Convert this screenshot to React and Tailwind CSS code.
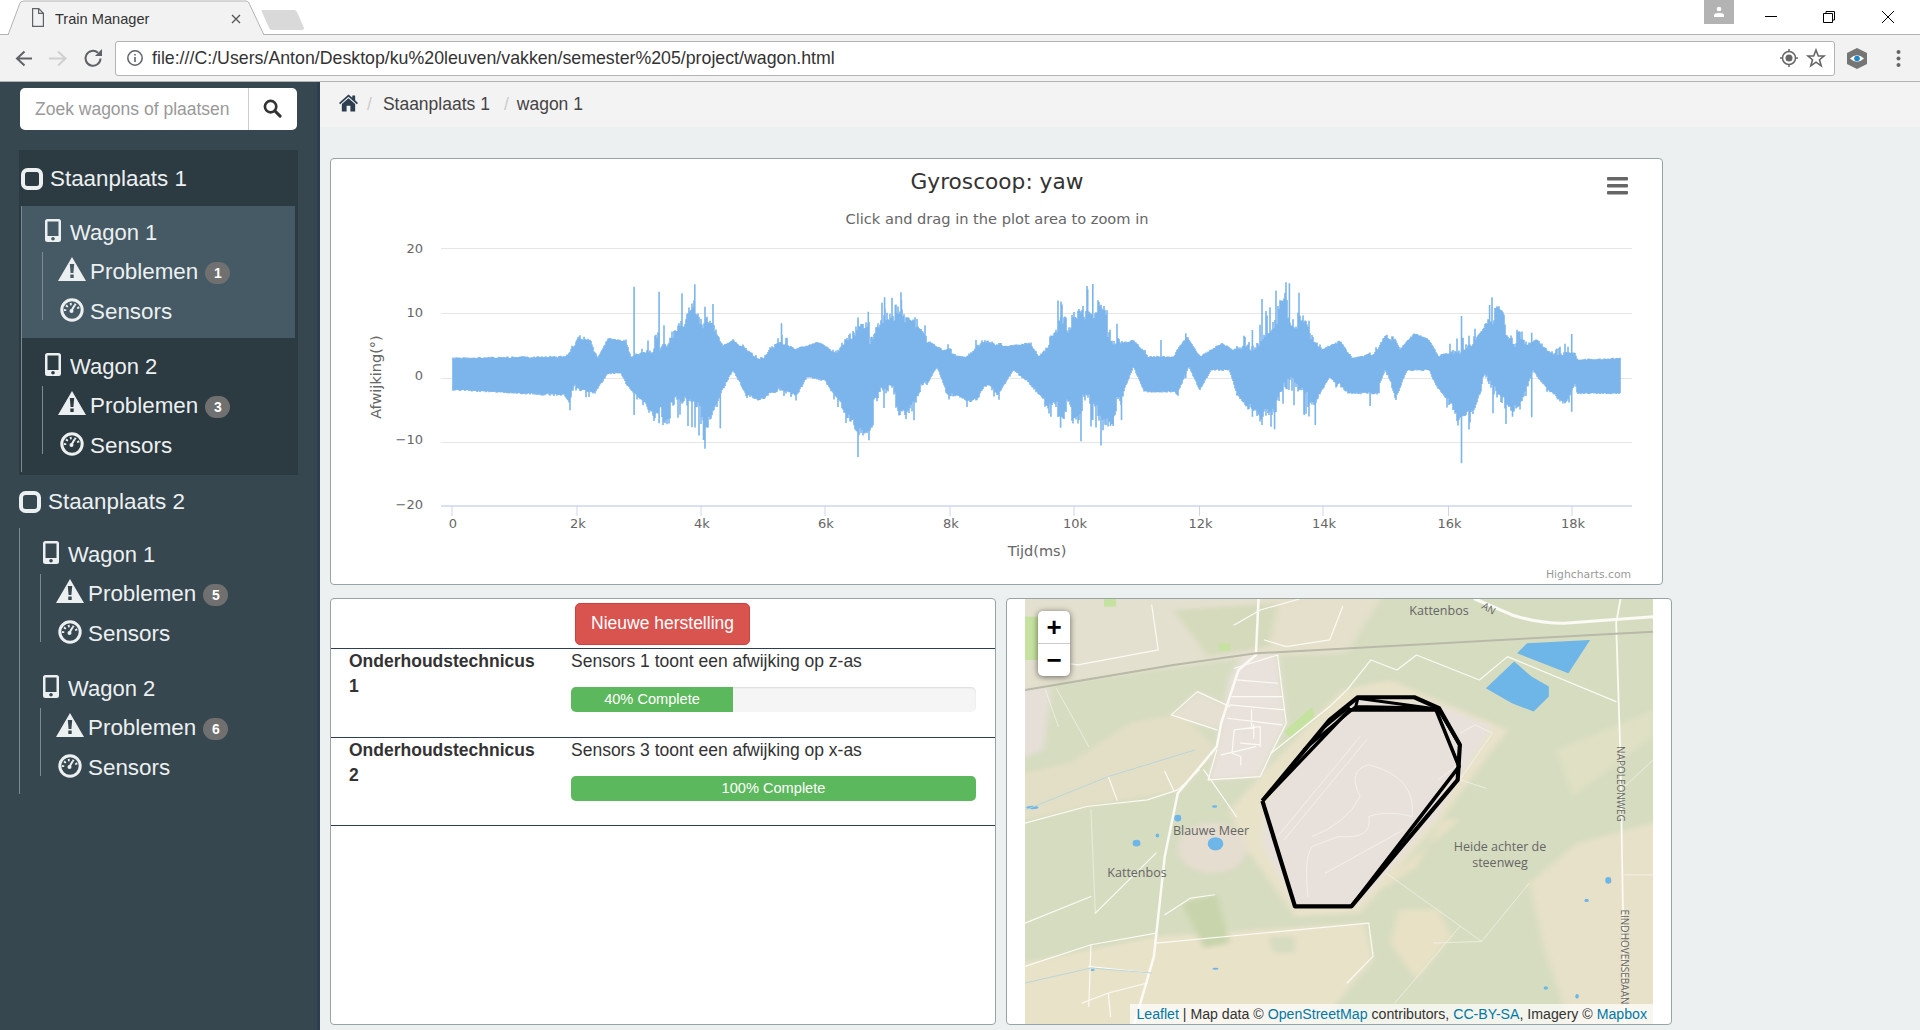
import { Fragment } from "react"

const sans = "font-['Liberation_Sans',Arial,sans-serif]"

// zoomed-reference coordinates -> page pixels
const ax = (u) => 330 + u / 1.96
const bx = (u) => 1100 + u / 2.703
const py = (v) => 150 + v / 3

const topLeft = [[240,625],[460,620],[470,600],[490,565],[510,575],[525,625],[545,565],[580,575],[590,620],[625,600],[660,570],[700,520],[715,480],[740,550],[770,590],[790,570],[820,610],[850,630],[880,570],[910,600],[930,590],[960,575],[990,610],[1020,580],[1060,560],[1090,500],[1130,530],[1170,570],[1200,600],[1250,620],[1290,570],[1320,590],[1370,580],[1390,620],[1430,560],[1490,470],[1530,540]]
const topRight = [[0,520],[60,590],[90,570],[130,620],[200,620],[235,560],[270,620],[330,580],[360,600],[400,600],[440,570],[500,490],[550,530],[600,600],[650,570],[680,625],[740,610],[775,550],[810,600],[850,550],[890,570],[915,620],[950,600],[1010,590],[1050,510],[1100,530],[1150,590],[1180,570],[1220,610],[1285,610],[1290,630],[1408,625]]
const botLeft = [[240,720],[460,735],[470,760],[480,705],[510,715],[520,725],[545,670],[570,670],[590,720],[610,750],[640,790],[680,760],[720,780],[740,790],[770,715],[790,660],[815,730],[850,750],[880,715],[915,730],[935,680],[970,690],[990,740],[1030,800],[1060,790],[1080,730],[1130,770],[1170,700],[1190,650],[1210,730],[1260,760],[1290,700],[1310,730],[1340,660],[1370,700],[1420,780],[1480,750],[1530,790]]
const botRight = [[0,760],[30,790],[60,740],[90,650],[120,725],[210,725],[240,650],[270,720],[300,660],[350,660],[370,730],[430,790],[470,780],[500,700],[550,740],[580,760],[620,680],[670,730],[750,730],[770,660],[800,740],[830,660],[890,660],[910,710],[970,780],[1010,770],[1040,670],[1080,770],[1130,790],[1170,660],[1210,720],[1260,760],[1285,700],[1290,730],[1408,730]]

const toPage = (left, right) => [
  ...left.map(([u, v]) => [ax(u), py(v)]),
  ...right.map(([u, v]) => [bx(u), py(v)]),
]
const envTop = toPage(topLeft, topRight)
const envBot = toPage(botLeft, botRight)

const spikes = [
  [ax(596),410,795],[ax(645),425,820],[ax(690),430,0],[ax(715),403,0],[ax(732),0,870],[ax(765),0,835],
  [ax(1055),485,838],[ax(1035),510,815],[ax(1087),442,0],[ax(1108),465,0],[ax(1120),450,0],[ax(885),520,0],
  [ax(1432),500,833],[ax(1485),418,0],[ax(1495),402,810],[ax(1535),0,828],[ax(1413),0,800],
  [bx(438),447,825],[bx(500),428,0],[bx(512),400,0],[bx(538),428,0],[bx(472),0,838],[bx(412),540,800],
  [bx(582),0,825],[bx(552),0,795],[bx(977),498,940],[bx(1053),465,0],[bx(1167),548,802],[bx(1275),552,785],
  [bx(1115),0,800],[bx(58),0,810],[bx(28),0,828],[bx(165),570,0],[bx(232),550,0],[bx(730),0,768],[bx(800),0,750],
]

const lerp = (pts, x) => {
  for (let i = 1; i < pts.length; i++) {
    if (x <= pts[i][0]) {
      const [x0, y0] = pts[i - 1]
      const [x1, y1] = pts[i]
      return y0 + ((y1 - y0) * (x - x0)) / (x1 - x0 || 1)
    }
  }
  return pts[pts.length - 1][1]
}

let seed = 20517
const rand = () => {
  seed = (seed * 16807) % 2147483647
  return seed / 2147483647
}

// jagged outline: slow clusters centred on the envelope, column noise, stray peaks
const buildWave = () => {
  let d = ""
  let left = 0
  let topOff = 0
  let botOff = 0
  for (let x = 453; x <= 1620; x += 1) {
    if (left-- <= 0) {
      left = 3 + Math.floor(rand() * 12)
      topOff = rand() - 0.6
      botOff = rand() - 0.6
    }
    const t = lerp(envTop, x)
    const b = lerp(envBot, x)
    const rough = Math.min(2, Math.max(0, (b - t) / 35 - 1) * 1.6)
    const up = rand() * 1.5 - 1 + (topOff * 14 + rand() * 5 - 2.5) * rough - (rand() < 0.13 ? rand() * 16 * rough : 0)
    const down = rand() * 1.5 - 1 + (botOff * 14 + rand() * 5 - 2.5) * rough - (rand() < 0.13 ? rand() * 16 * rough : 0)
    d += `M${x} ${(t + up).toFixed(1)}V${(b - down).toFixed(1)}`
  }
  spikes.forEach(([x, a, c]) => {
    const mid = 378
    d += `M${x.toFixed(1)} ${a ? py(a).toFixed(1) : mid}V${c ? py(c).toFixed(1) : mid}`
  })
  return d
}
const wavePath = buildWave()

const gridYs = [
  [248, 253, "20"],
  [313, 317, "10"],
  [378, 380, "0"],
  [442, 444, "−10"],
]
const ticks = [
  [452, "0"],[577, "2k"],[701, "4k"],[825, "6k"],[950, "8k"],[1074, "10k"],
  [1199.5, "12k"],[1323, "14k"],[1448.5, "16k"],[1572, "18k"],
]

const Chart = () => (
  <svg viewBox="331 159 1331 425" className="w-full h-full block" style={{ fontFamily: "'DejaVu Sans', sans-serif" }}>
    <text x="997" y="189" textAnchor="middle" fontSize="21.7" fill="#333">Gyroscoop: yaw</text>
    <text x="997" y="223.5" textAnchor="middle" fontSize="14.6" fill="#666">Click and drag in the plot area to zoom in</text>
    {gridYs.map(([y, labelY, label]) => (
      <Fragment key={y}>
        <line x1="441" x2="1632" y1={y + 0.5} y2={y + 0.5} stroke="#e6e6e6" />
        <text x="423" y={labelY} textAnchor="end" fontSize="13" fill="#666">{label}</text>
      </Fragment>
    ))}
    <text x="423" y="509" textAnchor="end" fontSize="13" fill="#666">−20</text>
    <line x1="441" x2="1632" y1="506" y2="506" stroke="#ccd6eb" strokeWidth="1.5" />
    {ticks.map(([x, label]) => (
      <Fragment key={x}>
        <line x1={x} x2={x} y1="506" y2="516" stroke="#ccd6eb" />
        <text x={x + 1} y="528" textAnchor="middle" fontSize="13" fill="#666">{label}</text>
      </Fragment>
    ))}
    <path d={wavePath} stroke="#7cb5ec" strokeWidth="1.6" fill="none" />
    <text x="1037" y="556" textAnchor="middle" fontSize="14.5" fill="#666">Tijd(ms)</text>
    <text x="381" y="377" textAnchor="middle" fontSize="14.5" fill="#666" transform="rotate(-90 381 377)" dominantBaseline="middle" dy="-4">Afwijking(°)</text>
    <text x="1631" y="578" textAnchor="end" fontSize="10.8" fill="#999">Highcharts.com</text>
    <g fill="#666">
      <rect x="1607" y="177" width="21" height="3.5" rx="1" />
      <rect x="1607" y="184" width="21" height="3.5" rx="1" />
      <rect x="1607" y="191" width="21" height="3.5" rx="1" />
    </g>
  </svg>
)

const MapDrawing = () => (
  <svg viewBox="58 27 1447 1276" preserveAspectRatio="none" className="absolute inset-0 w-full h-full">
    <defs>
      <filter id="soft" x="-5%" y="-5%" width="110%" height="110%">
        <feGaussianBlur stdDeviation="7" />
      </filter>
      <filter id="line" x="-5%" y="-5%" width="110%" height="110%">
        <feGaussianBlur stdDeviation="1.2" />
      </filter>
    </defs>
    <rect x="58" y="27" width="1447" height="1276" fill="#d6dcc0" />
    <g filter="url(#soft)">
      <polygon points="20,0 600,0 590,200 20,300" fill="#e4e0cf" />
      <polygon points="600,0 890,0 800,190 590,200" fill="#e4e0cb" />
      <polygon points="400,60 640,40 620,170 480,200" fill="#d5dabc" />
      <polygon points="20,300 120,290 100,480 20,520" fill="#e6dfd8" />
      <polygon points="20,700 200,650 420,600 500,480 420,370 300,400 160,520 20,560" fill="#e3dfc6" />
      <polygon points="790,300 900,270 1170,420 1010,700 830,970 680,980 560,760 530,660 700,420" fill="#e8e2c9" />
      <polygon points="830,315 1000,340 1135,410 1000,690 820,950 680,950 605,760 610,640 740,420" fill="#e8e1db" />
      <ellipse cx="490" cy="775" rx="80" ry="75" fill="#e5ddd0" />
      <polygon points="560,200 640,195 660,400 625,490 600,560 480,570 500,480 530,260" fill="#e9e2dc" />
      <polygon points="395,375 455,305 530,350 500,420" fill="#e5e0d2" />
      <polygon points="20,1130 360,1040 840,1000 860,1110 720,1330 20,1330" fill="#e8e2c9" />
      <polygon points="1220,880 1330,760 1530,690 1530,1330 1320,1330 1250,1060" fill="#e6e1c8" />
      <polygon points="920,960 1010,960 1040,1040 960,1170 900,1060" fill="#e8e1c6" />
      <polygon points="880,900 960,830 1020,690 1060,690 900,860" fill="#e8e1c6" />
      <polygon points="1280,480 1505,360 1505,440 1320,620" fill="#dfe0c4" />
      <polygon points="420,940 500,915 530,1060 470,1075" fill="#c8d4ab" />
      <polygon points="620,1040 680,1040 680,1090 630,1090" fill="#d6dcc0" />
    </g>
    <g filter="url(#line)">
      <polygon points="58,80 90,80 90,210 58,210" fill="#c6e2a0" />
      <polygon points="240,27 268,27 268,50 240,50" fill="#c6e2a0" />
      <polygon points="505,160 530,160 530,182 505,182" fill="#c6e2a0" />
      <polygon points="655,425 720,350 725,380 670,445" fill="#c6e2a0" />
      <g fill="#6eb5e8">
        <polygon points="1192,190 1215,160 1360,150 1310,250" />
        <polygon points="1120,295 1185,215 1225,260 1265,290 1265,320 1230,365 1180,340" />
        <ellipse cx="497" cy="762" rx="18" ry="20" />
        <ellipse cx="1402" cy="872" rx="7" ry="10" />
        <ellipse cx="410" cy="685" rx="8" ry="10" />
        <ellipse cx="315" cy="760" rx="9" ry="10" />
        <ellipse cx="363" cy="737" rx="4" ry="6" />
        <ellipse cx="75" cy="653" rx="14" ry="5" />
        <ellipse cx="495" cy="650" rx="6" ry="4" />
        <ellipse cx="1352" cy="932" rx="5" ry="5" />
        <ellipse cx="1258" cy="1195" rx="5" ry="5" />
        <ellipse cx="1330" cy="1220" rx="4" ry="7" />
        <ellipse cx="497" cy="1137" rx="7" ry="3" />
        <ellipse cx="213" cy="1141" rx="6" ry="3" />
      </g>
      <g fill="none" stroke="#fbfaf4" strokeLinejoin="round" strokeLinecap="round">
        <path vectorEffect="non-scaling-stroke" strokeWidth="3" d="M1095 27L1180 75Q1240 100 1300 100L1505 80" />
        <path vectorEffect="non-scaling-stroke" strokeWidth="2.5" d="M596 27L590 195L550 240L510 400L500 470L410 610L380 800L355 1100L310 1303" />
        <path vectorEffect="non-scaling-stroke" strokeWidth="1.8" d="M1430 27L1420 100L1430 500L1440 1303" />
        <path vectorEffect="non-scaling-stroke" strokeWidth="1.2" d="M625 490L760 350L800 300L855 210L915 240L960 195L1105 270L1170 200L1420 335" />
        <path vectorEffect="non-scaling-stroke" strokeWidth="1.2" d="M350 45L365 180L180 225L90 210M500 420L395 375L455 305L530 350M540 235L640 195L660 400L625 490L600 560L480 570L500 480M545 270L640 280M535 320L650 320M530 345L655 360M525 385L650 405M580 360L580 410M510 495L590 470M540 420L600 410L600 470M540 420L535 490L555 500L555 525M555 460L600 465M585 405L585 445M470 540L545 680M610 150L660 170L760 150L790 50M540 105L600 60L690 27M200 650L340 630L410 600L460 540M200 650L58 700M250 560L270 630M380 545L400 600M360 790L220 970M58 1000L210 920M380 975L440 925L495 915M210 1065L360 1030M58 1130L210 1065L205 1250M205 1130L345 1150M190 1240L250 1210L340 1180M250 1210L255 1280M360 1060L850 1000L860 1100L800 1180" />
        <path vectorEffect="non-scaling-stroke" strokeWidth="1" opacity="0.55" d="M1000 1060L1110 1055L890 850M1220 880L1110 1055M1440 855L1505 855M1440 590L1505 510M910 1240L1060 1010M210 660L220 970M105 300L135 410M130 295L205 470M640 740L830 440M655 750L845 450M720 740Q800 700 830 620Q800 540 850 525Q960 560 950 680Q890 660 850 680Q860 750 780 740L720 770Q700 800 710 920M750 850L930 720M1060 430L1095 405L1135 430L1060 570L1120 595M1010 570L1060 520" />
      </g>
      <path d="M58 300L400 225L590 190L1505 125" fill="none" stroke="#b9b9aa" strokeWidth="2" vectorEffect="non-scaling-stroke" />
      <path d="M60 660L250 560L450 480M58 1180L210 1135L350 1150" fill="none" stroke="#b9d6d9" strokeWidth="1" vectorEffect="non-scaling-stroke" />
    </g>
    <g fill="none" stroke="#000" strokeLinejoin="round">
      <path vectorEffect="non-scaling-stroke" strokeWidth="4.2" d="M605 633L680 950L810 950L1055 570L1060 465L1012 355L955 322L825 322L760 390L605 633" />
      <path vectorEffect="non-scaling-stroke" strokeWidth="3.6" d="M605 633L805 360L1005 360L1058 530L810 950" />
      <path vectorEffect="non-scaling-stroke" strokeWidth="3" d="M700 480L820 350L825 325L1010 358L1060 465M820 350L1012 355M740 420L805 350" />
    </g>
  </svg>
)

const mapLabel = "absolute -translate-x-1/2 -translate-y-1/2 text-[#666] whitespace-nowrap font-['Open_Sans',sans-serif] text-[12.5px] leading-[16px] text-center"

const MapPanel = () => (
  <div className="relative w-[628px] h-full overflow-hidden">
    <MapDrawing />
    <span className={`${mapLabel} left-[414px] top-[12px]`}>Kattenbos</span>
    <span className={`${mapLabel} left-[186px] top-[232px]`}>Blauwe Meer</span>
    <span className={`${mapLabel} left-[112px] top-[274px]`}>Kattenbos</span>
    <span className={`${mapLabel} left-[475px] top-[256px]`}>Heide achter de<br />steenweg</span>
    <span className={`${mapLabel} left-[596px] top-[185px] rotate-90 text-[10px]!`}>NAPOLEONWEG</span>
    <span className={`${mapLabel} left-[600px] top-[358px] rotate-90 text-[10px]!`}>EINDHOVENSEBAAN</span>
    <span className={`${mapLabel} left-[464px] top-[9px] rotate-[30deg] text-[10px]! leading-[10px]!`}>AN</span>

    <div className={`absolute left-[13px] top-[12px] w-[32px] h-[65px] bg-white rounded-[5px] shadow-[0_1px_6px_rgba(0,0,0,0.55)] flex flex-col text-black ${sans}`}>
      <div className="h-[33px] flex items-center justify-center border-b border-[#ccc] text-[26px] font-bold leading-none">+</div>
      <div className="h-[32px] flex items-center justify-center text-[26px] font-bold leading-none">−</div>
    </div>

    <div className={`absolute right-0 bottom-0 h-[20px] px-[6px] bg-white/70 text-[14.15px] leading-[20px] text-[#333] whitespace-nowrap ${sans}`}>
      <span className="text-[#0078a8]">Leaflet</span> | Map data © <span className="text-[#0078a8]">OpenStreetMap</span> contributors, <span className="text-[#0078a8]">CC-BY-SA</span>, Imagery © <span className="text-[#0078a8]">Mapbox</span>
    </div>
  </div>
)

const IconSquare = () => (
  <svg viewBox="0 0 22 22" className="w-[22px] h-[22px] shrink-0">
    <rect x="2" y="2" width="18" height="18" rx="4.500" fill="none" stroke="#ecf0f1" strokeWidth="4" />
  </svg>
)

const IconPhone = () => (
  <svg viewBox="0 0 16 23" className="w-[16px] h-[23px] shrink-0 -translate-y-[2px]">
    <path fillRule="evenodd" fill="#ecf0f1" d="M2.5 0h11A2.5 2.5 0 0 1 16 2.5v18a2.5 2.5 0 0 1-2.5 2.5h-11A2.5 2.5 0 0 1 0 20.500v-18A2.500 2.500 0 0 1 2.500 0zM2.500 2.500v14.500h11V2.500zM8 18a1.800 1.800 0 1 0 0 3.600a1.800 1.800 0 0 0 0-3.600z" />
  </svg>
)

const IconWarning = () => (
  <svg viewBox="0 0 28 24" className="w-[28px] h-[24px] shrink-0 -translate-y-[3px]">
    <path fillRule="evenodd" fill="#ecf0f1" d="M14 0L28 24H0zM11.800 7l.8 9h2.800l.8-9zM12.300 17.500v3.500h3.400v-3.500z" />
  </svg>
)

const IconGauge = () => (
  <svg viewBox="0 0 24 24" className="w-[24px] h-[24px] shrink-0 -translate-y-[2px]">
    <circle cx="12" cy="12" r="10.200" fill="none" stroke="#ecf0f1" strokeWidth="3" />
    <path d="M5 13a7 7 0 0 1 14 0" fill="none" stroke="#ecf0f1" strokeWidth="2.400" strokeDasharray="1.800 2.600" />
    <path d="M11 13.500L14.500 7.500" stroke="#ecf0f1" strokeWidth="2" />
    <circle cx="11.500" cy="13" r="2" fill="#ecf0f1" />
  </svg>
)

const Wagon = ({ name, count, active }) => (
  <div className={`pt-[6px] pb-[12px] h-[132px] mb-[2px] ${active ? "bg-[#455a64]" : ""}`}>
    <div className="flex items-center h-[40px] pl-[23px] gap-[9px] text-[22px]">
      <IconPhone />
      <span>{name}</span>
    </div>
    <div className="ml-[20px] mt-[6px] h-[68px] border-l border-[#7d8a90] pl-[15px]">
      <div className="relative -mt-[6px] flex items-center h-[40px]">
        <div className="w-[32px]"><IconWarning /></div>
        <span className="text-[22.4px]">Problemen</span>
        <span className="ml-[7px] mt-[2px] h-[22px] w-[25px] rounded-full bg-[#707070] text-white text-[14px] font-bold flex items-center justify-center">{count}</span>
      </div>
      <div className="flex items-center h-[40px]">
        <div className="w-[32px] pl-[2px]"><IconGauge /></div>
        <span className="text-[22.4px]">Sensors</span>
      </div>
    </div>
  </div>
)

const Place = ({ name, counts, boxed, activeFirst }) => (
  <div className={boxed ? "mx-[19px] px-[2px] pr-[3px] pb-[1px] bg-[#2c3a41]" : "mx-[19px] mt-[1px]"}>
    <div className={`flex items-center gap-[7px] text-[22.4px] ${boxed ? "h-[56px] pt-[1px]" : "h-[52px]"}`}>
      <IconSquare />
      <span>{name}</span>
    </div>
    <div className="border-l border-[#7d8a90]">
      <Wagon name="Wagon 1" count={counts[0]} active={activeFirst} />
      <Wagon name="Wagon 2" count={counts[1]} />
    </div>
  </div>
)

const Sidebar = () => (
  <aside className={`w-[320px] shrink-0 bg-[#37474f] border-r-[3px] border-[#2c3e50] text-[#ecf0f1] ${sans}`}>
    <div className="flex ml-[20px] mt-[6px] mb-[20px] w-[277px] h-[42px] bg-white rounded-[5px] overflow-hidden">
      <input
        placeholder="Zoek wagons of plaatsen"
        className="w-[228px] pl-[15px] text-[17.5px] text-[#333] placeholder:text-[#999] outline-none"
      />
      <div className="flex-1 border-l border-[#ccc] flex items-center justify-center">
        <svg viewBox="0 0 20 20" className="w-[19px] h-[19px] -translate-x-[1px] -translate-y-[1px]">
          <circle cx="8" cy="8" r="6" fill="none" stroke="#333" strokeWidth="2.800" />
          <path d="M12.500 12.500L18 18" stroke="#333" strokeWidth="3.200" strokeLinecap="round" />
        </svg>
      </div>
    </div>
    <Place name="Staanplaats 1" counts={[1, 3]} boxed activeFirst />
    <Place name="Staanplaats 2" counts={[5, 6]} />
  </aside>
)

const Job = ({ num, text, pct }) => (
  <div className="flex h-[88.5px] border-b border-[#2c3e50]">
    <div className="w-[240px] pl-[18px] font-bold text-[#333]">
      Onderhoudstechnicus<br />{num}
    </div>
    <div className="flex-1 pr-[19px]">
      <div className="h-[25px] text-[#333]">{text}</div>
      <div className="mt-[13px] h-[25px] bg-[#f5f5f5] rounded-[5px] overflow-hidden shadow-[inset_0_1px_2px_rgba(0,0,0,0.1)]">
        <div
          className="h-full bg-[#5cb85c] text-white text-[14.6px] leading-[25px] text-center"
          style={{ width: `${pct}%` }}
        >
          {pct}% Complete
        </div>
      </div>
    </div>
  </div>
)

const Repairs = () => (
  <div className={`w-[666px] bg-white border border-[#95a5a6] rounded-[4px] text-[17.5px] leading-[25px] ${sans}`}>
    <div className="h-[50px] border-b border-[#2c3e50] pl-[244px] pt-[4px]">
      <button className="w-[175px] h-[42px] pb-[2px] rounded-[5px] bg-[#d9534f] border border-[#d43f3a] text-white text-[17.5px]">
        Nieuwe herstelling
      </button>
    </div>
    <Job num="1" text="Sensors 1 toont een afwijking op z-as" pct={40} />
    <Job num="2" text="Sensors 3 toont een afwijking op x-as" pct={100} />
  </div>
)

const TabStrip = () => (
  <div className={`relative h-[35px] shrink-0 bg-white flex ${sans}`}>
    <div className="absolute left-0 right-0 bottom-0 h-px bg-[#b3b3b3]" />
    <div className="relative w-[264px] h-[35px]">
      <svg viewBox="0 0 310 35" className="absolute left-0 top-0 w-[310px] h-[35px]">
        <path d="M8 35L20 3Q21 1 24 1H246Q248 1 249 3L264 35Z" fill="#f2f2f2" />
        <path d="M8 35L20 3Q21 1 24 1H246Q248 1 249 3L264 35" fill="none" stroke="#b3b3b3" />
        <path d="M262 10H294Q296 10 297 12L304 28Q304 30 302 30H272Q270 30 269 28L262 12Q261 10 262 10Z" fill="#d9d9d9" />
        <path fillRule="evenodd" fill="#5f6368" d="M32 8h7l5 5v14H32zM33.200 9.200v16.600h9.600V14H38V9.200zM39.200 10v2.800h2.800z" />
        <path d="M232 15L240 23M240 15L232 23" stroke="#555" strokeWidth="1.300" />
      </svg>
      <span className="absolute left-[55px] top-[9px] text-[14.6px] leading-[20px] text-[#333]">Train Manager</span>
    </div>
    <div className="ml-auto flex items-start">
      <div className="w-[30px] h-[24px] bg-[#b3b3b3] flex items-center justify-center">
        <svg viewBox="0 0 12 12" className="w-[12px] h-[12px]">
          <circle cx="6" cy="3" r="2.300" fill="#fff" />
          <path d="M1 11V9Q1 7 6 7T11 9V11Z" fill="#fff" />
        </svg>
      </div>
      <svg viewBox="0 0 186 35" className="w-[186px] h-[35px]">
        <path d="M31 16.500H43" stroke="#000" />
        <path d="M89.500 13.500H98.500V22.500H89.500ZM92 13V11.500H100.500V20H99" fill="none" stroke="#000" />
        <path d="M148 11L160 23M160 11L148 23" stroke="#000" />
      </svg>
    </div>
  </div>
)

const Toolbar = () => (
  <div className={`h-[47px] shrink-0 bg-[#f2f2f2] border-b border-[#b3b3b3] flex items-center ${sans}`}>
    <svg viewBox="0 0 115 46" className="w-[115px] h-[46px] shrink-0">
      <path d="M32 23.500H18M24.500 16.500L17 23.500L24.500 30.500" fill="none" stroke="#5f6368" strokeWidth="2" />
      <path d="M49 23.500H64M58 16.500L65.500 23.500L58 30.500" fill="none" stroke="#d0d0d0" strokeWidth="2" />
      <path d="M100.500 23.500A7.500 7.500 0 1 1 98 17.700" fill="none" stroke="#5f6368" strokeWidth="2" />
      <path d="M102 14V21H95Z" fill="#5f6368" />
    </svg>
    <div className="w-[1720px] h-[35px] bg-white border border-[#b3b3b3] rounded-[3px] flex items-center shrink-0">
      <svg viewBox="0 0 18 18" className="w-[18px] h-[18px] ml-[10px] shrink-0">
        <circle cx="9" cy="9" r="7.200" fill="none" stroke="#5f6368" strokeWidth="1.500" />
        <path d="M9 8V13M9 5V6.600" stroke="#5f6368" strokeWidth="1.600" />
      </svg>
      <span className="ml-[8px] pt-[1px] text-[17.75px] text-[#333] whitespace-nowrap">file:///C:/Users/Anton/Desktop/ku%20leuven/vakken/semester%205/project/wagon.html</span>
      <svg viewBox="0 0 50 22" className="ml-auto mr-[5px] w-[50px] h-[22px] shrink-0">
        <circle cx="10" cy="11" r="6.500" fill="none" stroke="#666" strokeWidth="1.500" />
        <circle cx="10" cy="11" r="3.500" fill="#666" />
        <path d="M10 2V5M10 17V20M1 11H4M16 11H19" stroke="#666" strokeWidth="1.500" />
        <path d="M37 3L39.300 9H45L40.500 12.700L42.200 18.800L37 15.200L31.800 18.800L33.500 12.700L29 9H34.700Z" fill="none" stroke="#666" strokeWidth="1.600" />
      </svg>
    </div>
    <svg viewBox="0 0 85 46" className="w-[85px] h-[46px] shrink-0">
      <path d="M22 13L32 18V29L22 34L12 29V18Z" fill="#757575" />
      <path d="M15 23.500Q22 17 29 23.500Q22 30 15 23.500Z" fill="#fff" />
      <circle cx="22" cy="23.500" r="2.800" fill="#1e88c7" />
      <g fill="#666">
        <circle cx="63.500" cy="17" r="2" />
        <circle cx="63.500" cy="23.500" r="2" />
        <circle cx="63.500" cy="30" r="2" />
      </g>
    </svg>
  </div>
)

const Breadcrumb = () => (
  <div className={`h-[45px] bg-[#f3f3f3] flex items-center pl-[19px] text-[17.5px] text-[#444] ${sans}`}>
    <svg viewBox="0 0 20 18" className="w-[19px] h-[18px] shrink-0 -translate-y-[2px]">
      <path d="M10 0L14 3.500V1H17V6.200L20 9L18.800 10.200L10 2.500L1.200 10.200L0 9Z" fill="#2c3e50" />
      <path d="M10 4L17 10V18H12V12H8V18H3V10Z" fill="#2c3e50" />
    </svg>
    <span className="ml-[9px] text-[#ccc]">/</span>
    <span className="ml-[11px]">Staanplaats 1</span>
    <span className="ml-[14px] text-[#ccc]">/</span>
    <span className="ml-[8px]">wagon 1</span>
  </div>
)

export default function App() {
  return (
    <div className="h-[1030px] w-[1920px] flex flex-col overflow-hidden bg-[#ecf0f1]">
      <TabStrip />
      <Toolbar />
      <div className="flex-1 flex min-h-0">
        <Sidebar />
        <main className="flex-1 min-w-0">
          <Breadcrumb />
          <div className="pl-[10px] pt-[31px]">
            <div className="w-[1333px] h-[427px] bg-white border border-[#95a5a6] rounded-[4px] overflow-hidden">
              <Chart />
            </div>
            <div className="mt-[13px] flex h-[427px]">
              <Repairs />
              <div className="ml-[10px] w-[666px] bg-white border border-[#95a5a6] rounded-[4px] pl-[18px] overflow-hidden">
                <MapPanel />
              </div>
            </div>
          </div>
        </main>
      </div>
    </div>
  )
}
